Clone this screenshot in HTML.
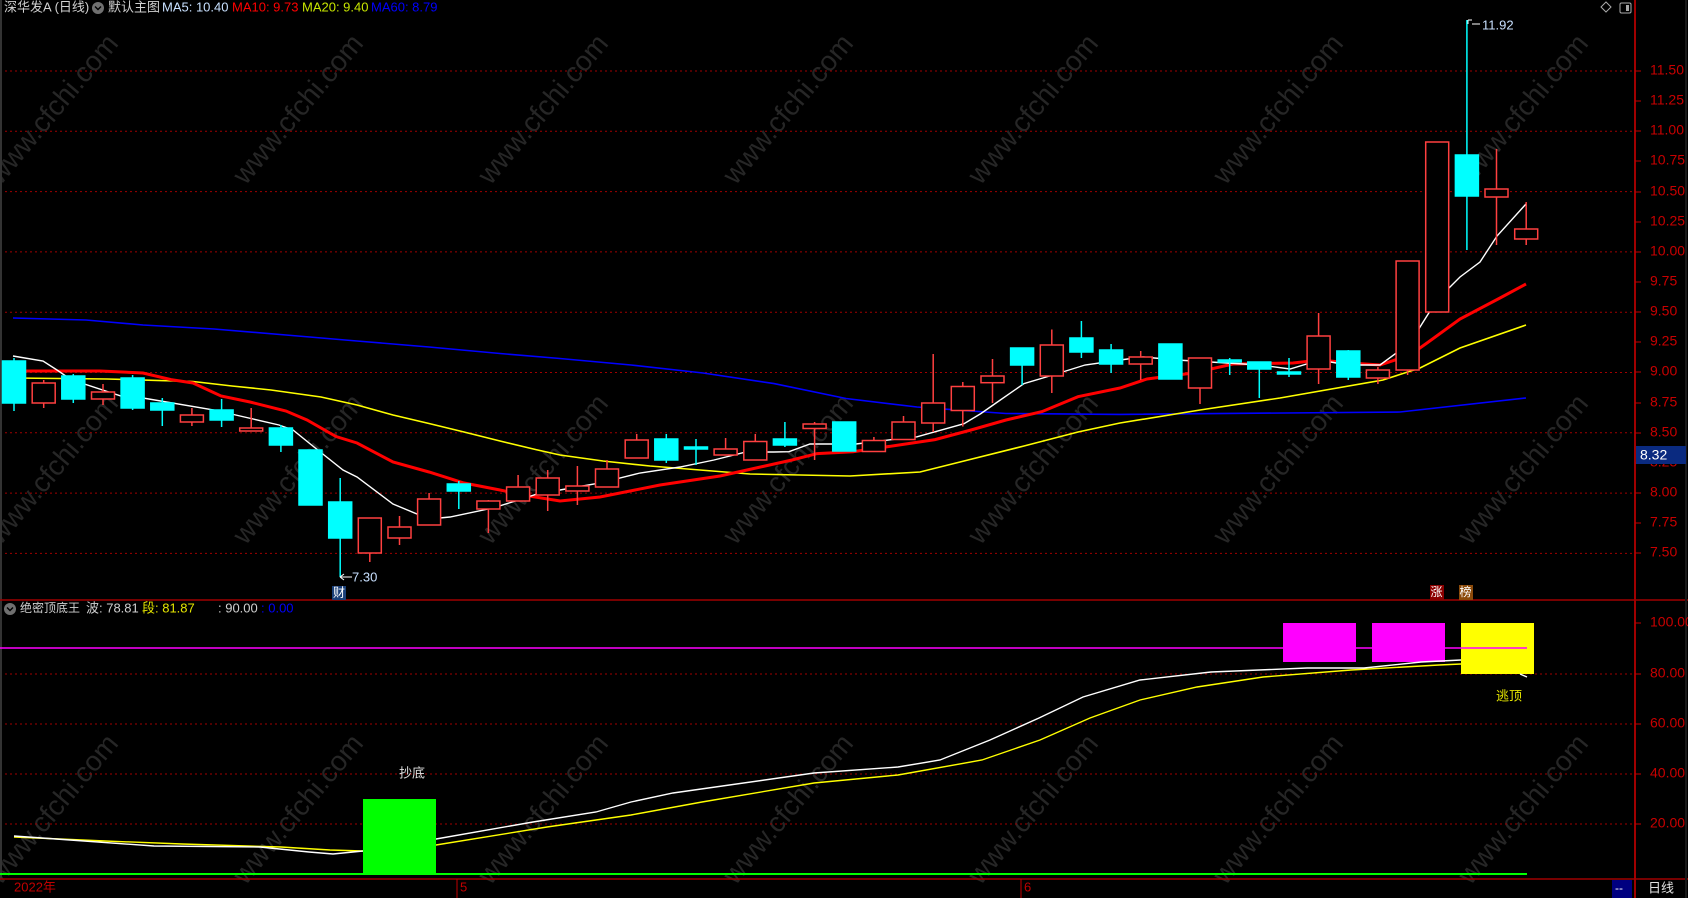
<!DOCTYPE html>
<html><head><meta charset="utf-8"><style>
html,body{margin:0;padding:0;background:#000;}
body{width:1688px;height:898px;overflow:hidden;position:relative;font-family:"Liberation Sans","Noto Sans CJK SC",sans-serif;}
svg{position:absolute;left:0;top:0;}
text{font-family:"Liberation Sans","Noto Sans CJK SC",sans-serif;}
</style></head><body>
<svg width="1688" height="898" viewBox="0 0 1688 898" xmlns="http://www.w3.org/2000/svg">
<rect width="1688" height="898" fill="#000"/>
<g fill="#262626" font-size="28">
<text transform="translate(60,115) rotate(-50)" text-anchor="middle">www.cfchi.com</text>
<text transform="translate(305,115) rotate(-50)" text-anchor="middle">www.cfchi.com</text>
<text transform="translate(550,115) rotate(-50)" text-anchor="middle">www.cfchi.com</text>
<text transform="translate(795,115) rotate(-50)" text-anchor="middle">www.cfchi.com</text>
<text transform="translate(1040,115) rotate(-50)" text-anchor="middle">www.cfchi.com</text>
<text transform="translate(1285,115) rotate(-50)" text-anchor="middle">www.cfchi.com</text>
<text transform="translate(1530,115) rotate(-50)" text-anchor="middle">www.cfchi.com</text>
<text transform="translate(60,475) rotate(-50)" text-anchor="middle">www.cfchi.com</text>
<text transform="translate(305,475) rotate(-50)" text-anchor="middle">www.cfchi.com</text>
<text transform="translate(550,475) rotate(-50)" text-anchor="middle">www.cfchi.com</text>
<text transform="translate(795,475) rotate(-50)" text-anchor="middle">www.cfchi.com</text>
<text transform="translate(1040,475) rotate(-50)" text-anchor="middle">www.cfchi.com</text>
<text transform="translate(1285,475) rotate(-50)" text-anchor="middle">www.cfchi.com</text>
<text transform="translate(1530,475) rotate(-50)" text-anchor="middle">www.cfchi.com</text>
<text transform="translate(60,815) rotate(-50)" text-anchor="middle">www.cfchi.com</text>
<text transform="translate(305,815) rotate(-50)" text-anchor="middle">www.cfchi.com</text>
<text transform="translate(550,815) rotate(-50)" text-anchor="middle">www.cfchi.com</text>
<text transform="translate(795,815) rotate(-50)" text-anchor="middle">www.cfchi.com</text>
<text transform="translate(1040,815) rotate(-50)" text-anchor="middle">www.cfchi.com</text>
<text transform="translate(1285,815) rotate(-50)" text-anchor="middle">www.cfchi.com</text>
<text transform="translate(1530,815) rotate(-50)" text-anchor="middle">www.cfchi.com</text>
</g>
<g stroke="#a00000" stroke-width="1" stroke-dasharray="2 3">
<line x1="0" y1="71" x2="1634" y2="71"/>
<line x1="0" y1="131.3" x2="1634" y2="131.3"/>
<line x1="0" y1="191.6" x2="1634" y2="191.6"/>
<line x1="0" y1="251.9" x2="1634" y2="251.9"/>
<line x1="0" y1="312.2" x2="1634" y2="312.2"/>
<line x1="0" y1="372.5" x2="1634" y2="372.5"/>
<line x1="0" y1="432.8" x2="1634" y2="432.8"/>
<line x1="0" y1="493.1" x2="1634" y2="493.1"/>
<line x1="0" y1="553.4" x2="1634" y2="553.4"/>
<line x1="0" y1="674" x2="1634" y2="674"/>
<line x1="0" y1="724" x2="1634" y2="724"/>
<line x1="0" y1="774" x2="1634" y2="774"/>
<line x1="0" y1="824" x2="1634" y2="824"/>
</g>
<line x1="1" y1="0" x2="1" y2="879" stroke="#333" stroke-width="2"/>
<line x1="0" y1="600" x2="1688" y2="600" stroke="#a00000" stroke-width="1.5"/>
<line x1="0" y1="879" x2="1688" y2="879" stroke="#a00000" stroke-width="1.5"/>
<line x1="1635" y1="0" x2="1635" y2="898" stroke="#a00000" stroke-width="2"/>
<line x1="1686" y1="0" x2="1686" y2="898" stroke="#1a1a1a" stroke-width="2"/>
<g fill="#c80000" font-size="14" dominant-baseline="middle">
<text x="1650" y="71">11.50</text><text x="1650" y="101">11.25</text>
<text x="1650" y="131">11.00</text><text x="1650" y="161">10.75</text>
<text x="1650" y="192">10.50</text><text x="1650" y="222">10.25</text>
<text x="1650" y="252">10.00</text><text x="1650" y="282">9.75</text>
<text x="1650" y="312">9.50</text><text x="1650" y="342">9.25</text>
<text x="1650" y="372">9.00</text><text x="1650" y="403">8.75</text>
<text x="1650" y="433">8.50</text><text x="1650" y="463">8.25</text>
<text x="1650" y="493">8.00</text><text x="1650" y="523">7.75</text>
<text x="1650" y="553">7.50</text>
<text x="1650" y="623">100.00</text><text x="1650" y="674">80.00</text>
<text x="1650" y="724">60.00</text><text x="1650" y="774">40.00</text>
<text x="1650" y="824">20.00</text>
</g>
<g stroke="#c00000" stroke-width="1">
<line x1="1635" y1="71" x2="1641" y2="71"/><line x1="1635" y1="101" x2="1641" y2="101"/>
<line x1="1635" y1="131" x2="1641" y2="131"/><line x1="1635" y1="161" x2="1641" y2="161"/>
<line x1="1635" y1="192" x2="1641" y2="192"/><line x1="1635" y1="222" x2="1641" y2="222"/>
<line x1="1635" y1="252" x2="1641" y2="252"/><line x1="1635" y1="282" x2="1641" y2="282"/>
<line x1="1635" y1="312" x2="1641" y2="312"/><line x1="1635" y1="342" x2="1641" y2="342"/>
<line x1="1635" y1="372" x2="1641" y2="372"/><line x1="1635" y1="403" x2="1641" y2="403"/>
<line x1="1635" y1="433" x2="1641" y2="433"/><line x1="1635" y1="463" x2="1641" y2="463"/>
<line x1="1635" y1="493" x2="1641" y2="493"/><line x1="1635" y1="523" x2="1641" y2="523"/>
<line x1="1635" y1="553" x2="1641" y2="553"/>
<line x1="1635" y1="623" x2="1641" y2="623"/><line x1="1635" y1="674" x2="1641" y2="674"/>
<line x1="1635" y1="724" x2="1641" y2="724"/><line x1="1635" y1="774" x2="1641" y2="774"/>
<line x1="1635" y1="824" x2="1641" y2="824"/>
</g>
<rect x="1636" y="446" width="50" height="18" fill="#0a2a80"/>
<text x="1640" y="456" fill="#fff" font-size="14" dominant-baseline="middle">8.32</text>

<polyline fill="none" stroke="#0000ff" stroke-width="1.6" points="13,318 86,320 143,325 214,329 286,335 357,341 429,347 500,353.5 560,358.5 631,365 703,373 774,383.6 846,398.5 917,407 953,409.7 1006,413.5 1120,414.4 1400,412 1526,398"/>
<polyline fill="none" stroke="#ffff00" stroke-width="1.6" points="13,378 107,379 193,381.5 232,386 271,390 321,397 357,405 393,415 429,423.5 464,432 500,441 536,449.6 560,455 603,461 650,466 750,474 850,476 920,472 960,462 1024,446 1078,432 1120,423 1200,410 1280,398 1383,380 1420,368 1460,348 1526,325"/>
<polyline fill="none" stroke="#ff0000" stroke-width="3" points="13,371 100,371 143,373 171,379.6 193,383 221,396 250,402 286,411 307,420 336,436.5 357,443 393,462 429,472 464,483 500,490 529,496 560,501 600,497 660,485 720,476 792,460 817,453.6 853,451.7 899,445 935,439.6 971,430 1006,420 1042,411.6 1078,396.7 1120,388 1147,379 1193,373 1233,364 1293,363 1320,360 1350,363 1380,365 1410,355 1427,343 1460,319 1500,298 1526,284"/>
<polyline fill="none" stroke="#ffffff" stroke-width="1.4" points="13,356 43,361 57,370 71,379.6 121,396 143,398 214,410 279,425 293,430 314,447 343,470 357,477 393,504 429,519 450,517 493,508 525,498 546,491 560,490 600,483 640,473 680,467 714,460 746,452 774,452 789,451.7 810,444 856,444 892,439.6 917,436.8 964,423.7 981,413.5 996,403 1024,383.6 1053,375 1085,365 1120,360 1143,357 1177,360 1227,363 1260,365 1290,369 1320,360 1347,365 1380,365 1410,343 1420,327 1437,300 1460,277 1480,262 1497,236 1526,204"/>

<g stroke-width="1.5">
<g stroke="#00ffff" fill="#00ffff">
<line x1="14" y1="358" x2="14" y2="411"/><rect x="2.5" y="361" width="23" height="42"/>
<line x1="73.3" y1="374" x2="73.3" y2="403"/><rect x="61.8" y="376" width="23" height="23"/>
<line x1="132.6" y1="375" x2="132.6" y2="410"/><rect x="121.1" y="378" width="23" height="30"/>
<line x1="162.3" y1="398" x2="162.3" y2="426"/><rect x="150.8" y="403" width="23" height="7"/>
<line x1="221.6" y1="399" x2="221.6" y2="427"/><rect x="210.1" y="410" width="23" height="10"/>
<line x1="280.9" y1="425" x2="280.9" y2="452"/><rect x="269.4" y="428" width="23" height="17"/>
<rect x="299" y="450" width="23" height="55"/>
<line x1="340.2" y1="478" x2="340.2" y2="577"/><rect x="328.7" y="502" width="23" height="36"/>
<line x1="458.8" y1="481" x2="458.8" y2="509"/><rect x="447.3" y="484" width="23" height="7"/>
<line x1="666.3" y1="434" x2="666.3" y2="463"/><rect x="654.8" y="439" width="23" height="21"/>
<line x1="696" y1="439" x2="696" y2="465"/><rect x="684.5" y="447" width="23" height="2"/>
<line x1="784.9" y1="422" x2="784.9" y2="447"/><rect x="773.4" y="439" width="23" height="6"/>
<rect x="832.7" y="422" width="23" height="29"/>
<line x1="1022.1" y1="348" x2="1022.1" y2="385"/><rect x="1010.6" y="348" width="23" height="17"/>
<line x1="1081.4" y1="321" x2="1081.4" y2="358"/><rect x="1069.9" y="338" width="23" height="14"/>
<line x1="1111.1" y1="344" x2="1111.1" y2="373"/><rect x="1099.6" y="350" width="23" height="14"/>
<rect x="1158.9" y="344" width="23" height="35"/>
<line x1="1229.7" y1="358" x2="1229.7" y2="375"/><rect x="1218.2" y="360" width="23" height="2"/>
<line x1="1259.3" y1="362" x2="1259.3" y2="398"/><rect x="1247.8" y="362" width="23" height="7"/>
<line x1="1289" y1="358" x2="1289" y2="377"/><rect x="1277.5" y="372" width="23" height="2"/>
<line x1="1348.3" y1="350" x2="1348.3" y2="380"/><rect x="1336.8" y="351" width="23" height="26"/>
<line x1="1466.9" y1="20" x2="1466.9" y2="250"/><rect x="1455.4" y="155" width="23" height="41"/>
</g>
<g stroke="#ff4040" fill="#000">
<line x1="43.7" y1="380" x2="43.7" y2="408"/><rect x="32.2" y="383" width="23" height="20"/>
<line x1="103" y1="384" x2="103" y2="405"/><rect x="91.5" y="392" width="23" height="7"/>
<line x1="191.9" y1="408" x2="191.9" y2="426"/><rect x="180.4" y="415" width="23" height="7"/>
<line x1="251.2" y1="408" x2="251.2" y2="431"/><rect x="239.7" y="428" width="23" height="3"/>
<line x1="369.8" y1="518" x2="369.8" y2="562"/><rect x="358.3" y="518" width="23" height="35"/>
<line x1="399.5" y1="516" x2="399.5" y2="545"/><rect x="388" y="527" width="23" height="11"/>
<line x1="429.1" y1="493" x2="429.1" y2="525"/><rect x="417.6" y="499" width="23" height="26"/>
<line x1="488.4" y1="500" x2="488.4" y2="533"/><rect x="476.9" y="501" width="23" height="8"/>
<line x1="518.1" y1="475" x2="518.1" y2="501"/><rect x="506.6" y="487" width="23" height="14"/>
<line x1="547.7" y1="470" x2="547.7" y2="511"/><rect x="536.2" y="478" width="23" height="17"/>
<line x1="577.4" y1="466" x2="577.4" y2="505"/><rect x="565.9" y="486" width="23" height="5"/>
<line x1="607" y1="460" x2="607" y2="487"/><rect x="595.5" y="469" width="23" height="18"/>
<line x1="636.7" y1="434" x2="636.7" y2="458"/><rect x="625.2" y="440" width="23" height="18"/>
<line x1="725.6" y1="438" x2="725.6" y2="455"/><rect x="714.1" y="449" width="23" height="6"/>
<line x1="755.3" y1="434" x2="755.3" y2="460"/><rect x="743.8" y="441.5" width="23" height="18.5"/>
<line x1="814.6" y1="422" x2="814.6" y2="460"/><rect x="803.1" y="424" width="23" height="4.5"/>
<line x1="873.9" y1="437" x2="873.9" y2="452"/><rect x="862.4" y="440.5" width="23" height="11"/>
<line x1="903.5" y1="416" x2="903.5" y2="440"/><rect x="892" y="422" width="23" height="17.5"/>
<line x1="933.2" y1="354" x2="933.2" y2="432"/><rect x="921.7" y="403" width="23" height="20"/>
<line x1="962.8" y1="382" x2="962.8" y2="426.5"/><rect x="951.3" y="386.5" width="23" height="24"/>
<line x1="992.5" y1="359" x2="992.5" y2="403"/><rect x="981" y="376" width="23" height="6.7"/>
<line x1="1051.8" y1="329.5" x2="1051.8" y2="393"/><rect x="1040.3" y="345" width="23" height="31"/>
<line x1="1140.7" y1="351" x2="1140.7" y2="380"/><rect x="1129.2" y="357" width="23" height="7"/>
<line x1="1200" y1="358" x2="1200" y2="404"/><rect x="1188.5" y="358" width="23" height="30"/>
<line x1="1318.6" y1="313" x2="1318.6" y2="384"/><rect x="1307.1" y="336" width="23" height="33"/>
<line x1="1377.9" y1="367" x2="1377.9" y2="384"/><rect x="1366.4" y="370" width="23" height="8"/>
<line x1="1407.6" y1="261" x2="1407.6" y2="375"/><rect x="1396.1" y="261" width="23" height="109"/>
<rect x="1425.7" y="142" width="23" height="170"/>
<line x1="1496.5" y1="149" x2="1496.5" y2="245"/><rect x="1485" y="189" width="23" height="8"/>
<line x1="1526.2" y1="202" x2="1526.2" y2="245"/><rect x="1514.7" y="229" width="23" height="10"/>
</g>
</g>
<path d="M1468,20 h4 M1468,20 v4 M1472,24 l8,0" stroke="#fff" stroke-width="1" fill="none"/>
<text x="1482" y="26" fill="#c8e0ff" font-size="13" dominant-baseline="middle">11.92</text>
<path d="M340,577 h12 M340,577 l4,-3 M340,577 l4,3" stroke="#fff" stroke-width="1" fill="none"/>
<text x="352" y="578" fill="#c8e0ff" font-size="13" dominant-baseline="middle">7.30</text>
<rect x="332" y="586" width="14" height="14" fill="#1a3f78"/>
<text x="333" y="593.5" fill="#fff" font-size="12" dominant-baseline="middle">财</text>
<rect x="1430" y="585" width="14" height="15" fill="#8b0000"/>
<text x="1430.5" y="593" fill="#fff" font-size="12" dominant-baseline="middle">涨</text>
<rect x="1459" y="585" width="14" height="15" fill="#8b4a0a"/>
<text x="1459.5" y="593" fill="#fff" font-size="12" dominant-baseline="middle">榜</text>

<g font-size="13" dominant-baseline="middle">
<text x="4" y="8" fill="#d0d0d0">深华发A (日线)</text>
<circle cx="98" cy="8" r="6" fill="#707070"/>
<path d="M95,6.5 l3,3 l3,-3" stroke="#000" stroke-width="1.4" fill="none"/>
<text x="108" y="8" fill="#d0d0d0">默认主图</text>
<text x="162" y="8" fill="#c8e0ff">MA5: 10.40</text>
<text x="232" y="8" fill="#ff0000">MA10: 9.73</text>
<text x="302" y="8" fill="#c8e600">MA20: 9.40</text>
<text x="371" y="8" fill="#0000ff">MA60: 8.79</text>
</g>
<path d="M1606,2 l5,5 l-5,5 l-5,-5 z" stroke="#aaa" fill="none" stroke-width="1"/>
<rect x="1620" y="3" width="11" height="10" rx="1.5" stroke="#aaa" fill="none" stroke-width="1"/>
<rect x="1626" y="5" width="3" height="6" fill="#aaa"/>

<g font-size="13" dominant-baseline="middle">
<circle cx="10" cy="609" r="6" fill="#707070"/>
<path d="M7,607.5 l3,3 l3,-3" stroke="#000" stroke-width="1.4" fill="none"/>
<text x="20" y="609" fill="#d0d0d0" font-size="12">绝密顶底王</text>
<text x="86" y="609" fill="#d0d0d0">波: 78.81</text>
<text x="142" y="609" fill="#e6e600">段: 81.87</text>
<text x="218" y="609" fill="#d0d0d0">: 90.00</text>
<text x="261" y="609" fill="#0000ff">: 0.00</text>
</g>
<line x1="0" y1="648" x2="1527" y2="648" stroke="#ff00ff" stroke-width="1.5"/>
<rect x="1283" y="623" width="73" height="39" fill="#ff00ff"/>
<rect x="1372" y="623" width="73" height="39" fill="#ff00ff"/>
<polyline fill="none" stroke="#ffff00" stroke-width="1.4" points="14,837 105,841 182,844 281,847 330,850 363,851 436,845 547,827 631,815 702,802 814,783 898,775 982,760 1040,740 1090,718 1140,700 1197,687 1263,677 1351,670 1439,665 1461,664"/>
<polyline fill="none" stroke="#ffffff" stroke-width="1.4" points="14,836 70,840 154,846 260,847 309,852 333,854 363,851 436,839 533,822 596,812 631,802 673,793 814,773 898,767 940,760 990,740 1039,718 1083,697 1140,680 1211,672 1307,668 1364,668 1421,662 1461,660"/>
<rect x="1461" y="623" width="73" height="51" fill="#ffff00"/>
<line x1="1461" y1="648" x2="1527" y2="648" stroke="#ff00ff" stroke-width="1.5"/>
<polyline fill="none" stroke="#ffffff" stroke-width="1.4" points="1520,674 1527,677"/>
<rect x="363" y="799" width="73" height="75" fill="#00ff00"/>
<line x1="0" y1="874" x2="1527" y2="874" stroke="#00ff00" stroke-width="2"/>
<text x="399" y="774" fill="#e0e0e0" font-size="13" dominant-baseline="middle">抄底</text>
<text x="1496" y="697" fill="#e6e600" font-size="13" dominant-baseline="middle">逃顶</text>

<g fill="#c00000" font-size="13" dominant-baseline="middle">
<text x="14" y="888">2022年</text>
<text x="460" y="888">5</text>
<text x="1024" y="888">6</text>
</g>
<line x1="457" y1="879" x2="457" y2="898" stroke="#c00000" stroke-width="1"/>
<line x1="1021" y1="879" x2="1021" y2="898" stroke="#c00000" stroke-width="1"/>
<rect x="1612" y="880" width="20" height="18" fill="#000080"/>
<text x="1615" y="889" fill="#fff" font-size="12" dominant-baseline="middle">--</text>
<text x="1648" y="889" fill="#e0e0e0" font-size="13" dominant-baseline="middle">日线</text>
</svg>
</body></html>
